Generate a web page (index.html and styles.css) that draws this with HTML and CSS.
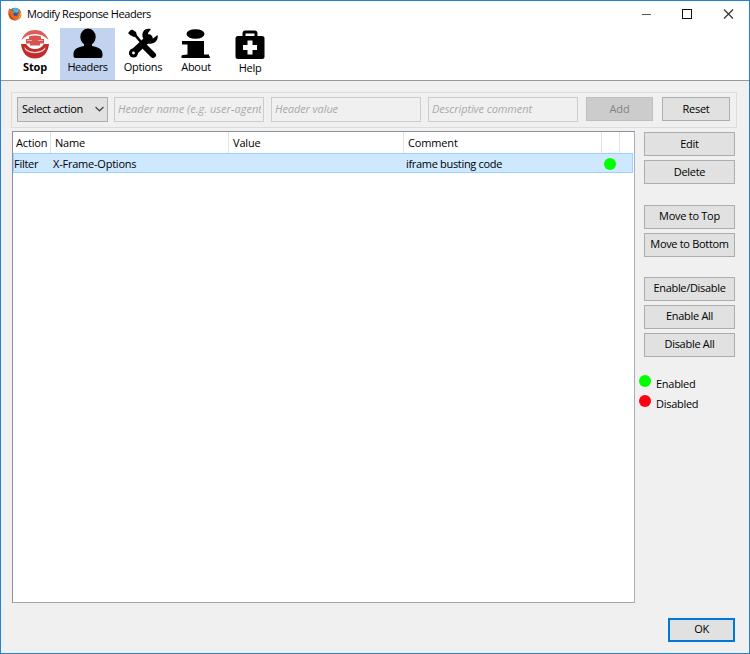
FILE: index.html
```html
<!DOCTYPE html>
<html lang="en">
<head>
<meta charset="utf-8">
<title>Modify Response Headers</title>
<link rel="stylesheet" href="styles.css">
</head>
<body>
<div class="window">
  <header class="titlebar">
    <svg class="logo" viewBox="0 0 14 14">
      <circle cx="7" cy="7" r="6.2" fill="#245d9d"/>
      <path d="M4 2C7 0 11 1 12 4L9 6 6 5Z" fill="#55b3e4"/>
      <path d="M1.2 1.5C3 2 4 2.5 4.5 4L7 5 5.5 6.5C5 9 8 10 10 8L9 7C11 7 11 4 10 2C13 4 14 7 13 10C10 15 3 14 1 10C0 7 0 4 1.2 1.5Z" fill="#e66a22"/>
      <path d="M12 4C14 8 12 12 8 13C12 11 12 8 12 4Z" fill="#ffc942"/>
      <path d="M1 5C0 9 3 13 7 13C4 11 2 9 1 5Z" fill="#bd3924"/>
    </svg>
    <h1 class="title">Modify Response Headers</h1>
    <svg class="controls" viewBox="0 0 94 12">
      <path d="M1 5.5H10" stroke="#555" fill="none"/>
      <rect x="41.5" y=".5" width="9" height="9" fill="none" stroke="#111"/>
      <path d="M83 .5L92 9.500M92 .5L83 9.500" stroke="#333" stroke-width="1.2" fill="none"/>
    </svg>
  </header>
  <nav class="toolbar">
    <a class="tool stop">
      <svg viewBox="0 0 30 30">
        <path d="M1.500 12C4 5 9 2 15 2S26 5 28.500 12C25 8 20 6 15 6S5 8 1.500 12Z" fill="#e05a58"/>
        <path d="M9 8.500Q15 6.500 21 8.500V11H24V15.500H20V17.500H10V15.500H6V11H9Z" fill="#d65553"/>
        <path d="M7 12.500H12M18 12.500H23" stroke="#ecaaa8"/>
        <path d="M1 16H6C8 19 11 21 15 21S22 19 24 16H29C28 25 23 30.500 15 30.500S2 25 1 16Z" fill="#c22c2c"/>
        <path d="M4.500 19C9 25.500 21 25.500 25.500 19L25 21.500C20 26.500 10 26.500 5 21.500Z" fill="#f5dada"/>
      </svg>
      <span>Stop</span>
    </a>
    <a class="tool active">
      <svg viewBox="0 0 30 30">
        <ellipse cx="15" cy="9" rx="7.700" ry="8.500"/>
        <path d="M11 15H19V18C25 19 29.500 21 29.500 26V28Q29.500 30 27.500 30H2.500Q.5 30 .5 28V26C.5 21 5 19 11 18Z"/>
      </svg>
      <span>Headers</span>
    </a>
    <a class="tool options">
      <svg viewBox="0 0 30 30">
        <path d="M2 3L7 7 13 14" stroke="#000" stroke-width="2.600" fill="none"/>
        <path d="M0 5L4 1.500 8 4 9 8 6 9 2 7Z"/>
        <path d="M18 20L25 27" stroke="#000" stroke-width="6" stroke-linecap="round"/>
        <path d="M5 25L21 10" stroke="#000" stroke-width="7" stroke-linecap="round"/>
        <path d="M23 1C16-.5 13 5 15 10L20 15.500C26 17 31 12 29.500 7L25 10.500 20.500 9 20 5Z"/>
        <circle cx="5.500" cy="25" r="4.500"/>
        <circle cx="5.500" cy="25" r="1.400" fill="#fff"/>
      </svg>
      <span>Options</span>
    </a>
    <a class="tool about">
      <svg viewBox="0 0 30 30">
        <ellipse cx="14.500" cy="6" rx="9" ry="4.800"/>
        <path d="M1 13H23V26.500H28V28Q29 28 29 30H.5V28Q.5 26.500 6.500 26.500V16.500H1Z"/>
      </svg>
      <span>About</span>
    </a>
    <a class="tool help">
      <svg viewBox="0 0 30 30">
        <path d="M9 9V5.500Q9 4 10.500 4H19.500Q21 4 21 5.500V9" fill="none" stroke="#000" stroke-width="3"/>
        <rect x=".5" y="8" width="29" height="23" rx="2.500"/>
        <path d="M12.500 12.500H17.500V17H22V22H17.500V26.500H12.500V22H8V17H12.500Z" fill="#fff"/>
      </svg>
      <span>Help</span>
    </a>
  </nav>
  <main class="content">
    <section class="form">
      <div class="select"><span>Select action</span>
        <svg viewBox="0 0 9 6"><path d="M.5 1L4.500 4.800 8.500 1" fill="none" stroke="#444" stroke-width="1.200"/></svg>
      </div>
      <div class="field name"><span>Header name (e.g. user-agent)</span></div>
      <div class="field"><span>Header value</span></div>
      <div class="field last"><span>Descriptive comment</span></div>
      <div class="btn add">Add</div>
      <div class="btn reset">Reset</div>
    </section>
    <div class="body">
      <section class="table">
        <div class="row head"><span>Action</span><span>Name</span><span>Value</span><span>Comment</span><span></span><span class="end"></span></div>
        <div class="row selected"><span>Filter</span><span>X-Frame-Options</span><span></span><span>iframe busting code</span><span><i class="dot"></i></span></div>
      </section>
      <aside class="side">
        <div class="group"><div class="btn">Edit</div><div class="btn">Delete</div></div>
        <div class="group low"><div class="btn">Move to Top</div><div class="btn wide">Move to Bottom</div></div>
        <div class="group low"><div class="btn wide">Enable/Disable</div><div class="btn">Enable All</div><div class="btn">Disable All</div></div>
        <div class="legend">
          <div><i class="dot"></i><span>Enabled</span></div>
          <div><i class="dot red"></i><span>Disabled</span></div>
        </div>
      </aside>
    </div>
    <footer class="footer"><div class="btn ok">OK</div></footer>
  </main>
</div>
</body>
</html>
```
FILE: styles.css
```css
* { box-sizing: border-box; }
body { margin: 0; font: 11px/14px "Open Sans", "Noto Sans", sans-serif; letter-spacing: -.28px; color: #000; }
.window { width: 750px; height: 654px; border: 1px solid #2583d2; background: #f0f0f0; overflow: hidden; }
.titlebar { height: 27px; background: #fff; display: flex; align-items: center; padding: 0 14px 0 7px; }
.logo { width: 14px; height: 14px; margin: 0 5px 1px 0; }
.title { font-size: 11px; font-weight: 400; margin: 0 0 2px; letter-spacing: -.43px; }
.controls { width: 94px; height: 12px; margin-left: auto; }
.toolbar { height: 53px; background: #fff; border-bottom: 1px solid #999; display: flex; padding-left: 9px; }
.tool { display: flex; flex-direction: column; align-items: center; width: 54px; height: 52px; }
.tool svg { width: 30px; height: 30px; flex: none; overflow: visible; }
.tool span { margin-top: 2px; }
.tool.stop { width: 50px; font-weight: 700; letter-spacing: -.16px; }
.tool.active { background: #c2d3ef; width: 55px; letter-spacing: -.4px; }
.tool.options { width: 56px; letter-spacing: -.3px; }
.tool.about { width: 50px; }
.tool.help { width: 58px; }
.tool.help span { margin-top: 3px; }
.content { padding: 11px 12px 0 10px; }
.form { height: 36px; border: 1px solid #dcdcdc; display: flex; align-items: flex-start; padding: 4px 0 0 5px; }
.select { width: 91px; height: 25px; border: 1px solid #adadad; background: #e1e1e1; display: flex; align-items: center; justify-content: space-between; padding: 0 3px 1px 4px; margin-right: 6px; }
.select svg { width: 9px; height: 6px; margin-bottom: 1px; }
.field { width: 150px; height: 25px; border: 1px solid #ccc; padding: 4px 3px 0; margin-right: 7px; font-style: italic; color: #aaa; letter-spacing: -.09px; }
.field span { display: block; overflow: hidden; white-space: nowrap; }
.field.name { letter-spacing: .03px; padding-right: 2px; }
.field.last { margin-right: 8px; }
.btn { height: 24px; border: 1px solid #adadad; background: #e1e1e1; text-align: center; line-height: 21px; }
.btn.add { width: 67px; background: #ccc; border-color: #bfbfbf; color: #838383; letter-spacing: -.1px; }
.btn.reset { width: 68px; margin-left: 9px; }
.body { display: flex; margin-top: 3px; padding-left: 1px; }
.table { width: 623px; height: 472px; background: #fff; border: 1px solid #8b919b; border-right-color: #abafb7; border-bottom-color: #a1a5ad; }
.row { display: grid; grid-template-columns: 38px 178px 175px 198px 18px 1fr; }
.head { height: 21px; }
.head span { border-right: 1px solid #e3e3e3; padding: 4px 0 0 4px; line-height: 14px; letter-spacing: -.16px; }
.head span:first-child { padding-left: 3px; }
.head .end { border: 0; }
.selected { width: 620px; height: 20px; background: #cde8ff; border: 1px solid #99d1ff; line-height: 19px; }
.selected span:nth-child(2) { padding-left: 1px; letter-spacing: -.22px; }
.selected span:nth-child(4) { padding-left: 1px; letter-spacing: -.32px; }
.selected .dot { margin: 4px 0 0 1px; }
.dot { display: block; width: 12px; height: 12px; border-radius: 6px; background: #0f0; }
.dot.red { background: #ff0010; }
.side { width: 99px; padding: 1px 0 0 9px; }
.group { display: grid; gap: 4px; margin-bottom: 21px; }
.group.low { margin-bottom: 20px; }
.low .btn { line-height: 20px; }
.side .btn { width: 91px; }
.side .wide { letter-spacing: -.32px; }
.legend { margin: -2px 0 0 -5px; }
.legend div { display: flex; height: 20px; }
.legend span { margin: 1px 0 0 5px; line-height: 15px; }
.footer { display: flex; justify-content: flex-end; margin-top: 15px; padding-right: 2px; }
.ok { width: 67px; border: 2px solid #0078d7; line-height: 18px; }
```
